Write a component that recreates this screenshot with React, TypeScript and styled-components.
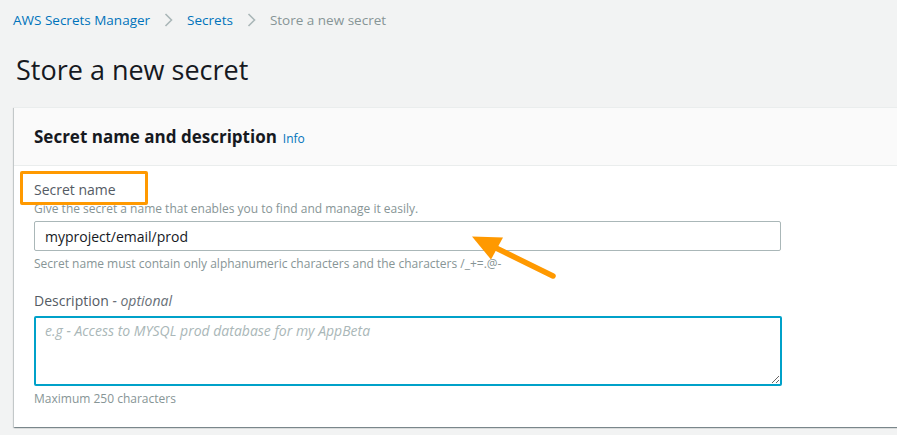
import React from "react";
import styled, { createGlobalStyle } from "styled-components";

const Global = createGlobalStyle`
  html, body { margin: 0; padding: 0; background: #f2f3f3; overflow: hidden; }
  body { font-family: "Open Sans", "Noto Sans", sans-serif; color: #16191f; }
  * { box-sizing: border-box; }
`;

const Page = styled.div`
  width: 897px;
  height: 435px;
  position: relative;
  overflow: hidden;
  padding: 11px 0 0 13px;
`;

const Breadcrumbs = styled.nav`
  display: flex;
  align-items: center;
  gap: 14px;
  font-size: 13.5px;
  line-height: 18px;
  height: 18px;
`;

const Crumb = styled.a<{ $current?: boolean }>`
  color: ${(p) => (p.$current ? "#879596" : "#0073bb")};
  text-decoration: none;
`;

const Chevron = styled.svg`
  width: 9px;
  height: 16px;
  display: block;
`;

const Title = styled.h1`
  margin: 24px 0 0 3px;
  font-size: 27px;
  line-height: 34px;
  font-weight: 400;
  color: #16191f;
`;

const Card = styled.section`
  margin: 20px 0 0 1px;
  width: 1000px;
  background: #fff;
  border-top: 1px solid #eaeded;
  box-shadow: 0 1px 1px 0 rgba(0, 28, 36, 0.3), 1px 1px 1px 0 rgba(0, 28, 36, 0.15),
    -1px 1px 1px 0 rgba(0, 28, 36, 0.15);
`;

const CardHeader = styled.header`
  height: 58px;
  background: #fafafa;
  border-bottom: 1px solid #eaeded;
  padding: 16px 20px 0 20px;
  display: flex;
  align-items: baseline;
  gap: 6px;
`;

const CardTitle = styled.h2`
  margin: 0;
  font-size: 17px;
  line-height: 26px;
  font-weight: 700;
  color: #16191f;
`;

const InfoLink = styled.a`
  font-size: 12px;
  color: #0073bb;
  text-decoration: none;
`;

const CardBody = styled.div`
  padding: 13px 20px 20px 20px;
  display: flex;
  flex-direction: column;
`;

const Label = styled.label<{ $gap?: number }>`
  font-size: 14px;
  line-height: 22px;
  color: #545b64;
  margin-top: ${(p) => p.$gap ?? 0}px;
`;

const Optional = styled.i`
  color: #687078;
`;

const Hint = styled.div<{ $gap?: number }>`
  font-size: 12px;
  line-height: 16px;
  color: #879596;
  margin-top: ${(p) => p.$gap ?? 0}px;
`;

const TextInput = styled.input`
  margin-top: 4px;
  width: 747px;
  height: 30px;
  border: 1px solid #aab7b8;
  border-radius: 2px;
  padding: 0 10px;
  font-family: "Open Sans", "Noto Sans", sans-serif;
  font-size: 14px;
  color: #16191f;
  background: #fff;
  outline: none;
`;

const TextArea = styled.textarea`
  margin-top: 4px;
  width: 748px;
  height: 70px;
  border: 2px solid #00a1c9;
  border-radius: 2px;
  padding: 3px 9px;
  font-family: "Open Sans", "Noto Sans", sans-serif;
  font-size: 14px;
  line-height: 20px;
  color: #16191f;
  caret-color: #16191f;
  outline: none;
  resize: both;
  &::placeholder {
    color: #aab7b8;
    font-style: italic;
  }
`;

const Highlight = styled.div`
  position: absolute;
  left: 20px;
  top: 171px;
  width: 128px;
  height: 34px;
  border: 3px solid #ff9900;
  border-radius: 2px;
  pointer-events: none;
`;

const ArrowSvg = styled.svg`
  position: absolute;
  left: 0;
  top: 0;
  width: 897px;
  height: 435px;
  pointer-events: none;
`;

const ChevronIcon = () => (
  <Chevron viewBox="0 0 9 16">
    <path d="M1.5 2 L7.5 8 L1.5 14" fill="none" stroke="#aab7b8" strokeWidth="1.6" />
  </Chevron>
);

export default function App() {
  const ref = React.useRef<HTMLTextAreaElement>(null);
  React.useEffect(() => {
    ref.current?.focus();
  }, []);
  return (
    <>
      <Global />
      <Page>
        <Breadcrumbs>
          <Crumb href="#">AWS Secrets Manager</Crumb>
          <ChevronIcon />
          <Crumb href="#">Secrets</Crumb>
          <ChevronIcon />
          <Crumb $current>Store a new secret</Crumb>
        </Breadcrumbs>
        <Title>Store a new secret</Title>
        <Card>
          <CardHeader>
            <CardTitle>Secret name and description</CardTitle>
            <InfoLink href="#">Info</InfoLink>
          </CardHeader>
          <CardBody>
            <Label>Secret name</Label>
            <Hint>Give the secret a name that enables you to find and manage it easily.</Hint>
            <TextInput defaultValue="myproject/email/prod" />
            <Hint $gap={5}>
              Secret name must contain only alphanumeric characters and the characters /_+=.@-
            </Hint>
            <Label $gap={18}>
              Description <Optional>- optional</Optional>
            </Label>
            <TextArea ref={ref} placeholder="e.g - Access to MYSQL prod database for my AppBeta" />
            <Hint $gap={5}>Maximum 250 characters</Hint>
          </CardBody>
        </Card>
        <Highlight />
        <ArrowSvg viewBox="0 0 897 435">
          <line x1="553" y1="276" x2="494" y2="247" stroke="#ff9900" strokeWidth="5.5" strokeLinecap="round" />
          <polygon points="472,236.5 503,237.5 491,259.5" fill="#ff9900" />
        </ArrowSvg>
      </Page>
    </>
  );
}
